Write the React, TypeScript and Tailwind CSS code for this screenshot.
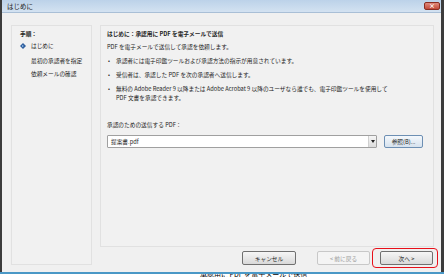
import * as React from "react";

const font = { fontFamily: '"Noto Sans CJK JP", "Noto Sans", sans-serif' };

const Bullet = ({ children }: { children: React.ReactNode }) => (
  <div className="flex mt-[5px]">
    <span className="w-[9px] flex-none pl-[1px]">•</span>
    <span className="flex-1">{children}</span>
  </div>
);

const Btn = ({ label, disabled = false }: { label: string; disabled?: boolean }) => (
  <div
    className={
      "h-[14px] flex items-center justify-center rounded-[2px] border " +
      (disabled
        ? "border-[#c8c8c8] bg-[#f4f4f4] text-[#9a9a9a]"
        : "border-[#707070] bg-gradient-to-b from-[#f6f6f6] to-[#d9d9d9] text-[#222]")
    }
  >
    {label}
  </div>
);

export default function App() {
  return (
    <div className="w-[444px] h-[277px] overflow-hidden bg-white text-[5.7px] leading-[9px] text-[#1e1e1e]" style={font}>
      <div className="h-[272px] flex flex-col border-l-2 border-r-[3px] border-[#3c3c3c]">
        {/* title bar */}
        <div className="h-[13px] flex items-center justify-between bg-gradient-to-b from-[#bcd2e9] to-[#d3e2f1] border-b border-[#a9bfd6] pl-[5px] pr-[1px]">
          <span className="text-[6.5px] text-[#1a1a1a]">はじめに</span>
          <div className="w-[16px] h-[8px] rounded-[2px] bg-gradient-to-b from-[#e08a7c] to-[#c24a3a] border border-[#8a2e22] flex items-center justify-center text-white text-[6px] leading-none font-bold">
            ×
          </div>
        </div>

        {/* body */}
        <div className="flex-1 flex bg-[#f0f0f0] pt-[12px] pb-[7px] pl-[9px] pr-[7px] gap-[8px]">
          {/* steps */}
          <div className="w-[85px] border border-[#e1e1e1] bg-[#f1f1f1] pt-[3px] pl-[8px]">
            <div className="font-bold">手順：</div>
            <div className="flex items-center mt-[3px]">
              <span className="w-[11px] flex-none">
                <svg width="6" height="6" viewBox="0 0 6 6">
                  <path d="M3 0 L6 3 L3 6 L0 3 Z" fill="#2f5f9e" />
                  <path d="M2 2 L4 3 L2 4 Z" fill="#9cc3ee" />
                </svg>
              </span>
              <span>はじめに</span>
            </div>
            <div className="pl-[11px] mt-[6px]">最初の承認者を指定</div>
            <div className="pl-[11px] mt-[4px]">依頼メールの確認</div>
          </div>

          {/* main column */}
          <div className="flex-1 flex flex-col">
            <div className="flex-1 border border-[#e1e1e1] bg-[#f1f1f1] pt-[3px] pl-[6px] pr-[10px]">
              <div className="font-bold">はじめに：承認用に PDF を電子メールで送信</div>
              <div className="mt-[4px]">PDF を電子メールで送信して承認を依頼します。</div>
              <Bullet>承認者には電子印鑑ツールおよび承認方法の指示が用意されています。</Bullet>
              <Bullet>受信者は、承認した PDF を次の承認者へ送信します。</Bullet>
              <Bullet>
                無料の Adobe Reader 9 以降または Adobe Acrobat 9 以降のユーザなら誰でも、電子印鑑ツールを使用して
                <br />
                PDF 文書を承認できます。
              </Bullet>
              <div className="mt-[18px]">承認のための送信する PDF：</div>
              <div className="flex mt-[6px] gap-[7px]">
                <div className="w-[270px] h-[13px] flex items-center border border-[#a0a0a0] bg-white rounded-[1px]">
                  <span className="flex-1 pl-[3px]">提案書.pdf</span>
                  <div className="w-[8px] h-[11px] flex items-center justify-center border-l border-[#d0d0d0] bg-gradient-to-b from-[#f6f6f6] to-[#dcdcdc]">
                    <svg width="4" height="3" viewBox="0 0 4 3">
                      <path d="M0 0 L4 0 L2 3 Z" fill="#222" />
                    </svg>
                  </div>
                </div>
                <div className="w-[39px] h-[13px] flex items-center justify-center rounded-[2px] border border-[#6d8fb3] bg-gradient-to-b from-[#f4f8fc] to-[#d6e2ee]">
                  参照(B)...
                </div>
              </div>
            </div>

            {/* buttons */}
            <div className="flex justify-end items-center mt-[4px] pr-[1px]">
              <div className="w-[54px]">
                <Btn label="キャンセル" />
              </div>
              <div className="w-[53px] ml-[21px]">
                <Btn label="< 前に戻る" disabled />
              </div>
              <div className="w-[53px] ml-[10px] relative">
                <Btn label="次へ >" />
                <div className="absolute left-[-8px] right-[-5px] top-[-3px] bottom-[-3px] rounded-[4px] border-[1.5px] border-[#e8101a]" />
              </div>
            </div>
          </div>
        </div>
      </div>
      <div className="h-[2px] bg-[#4a98c6]" />
      <div className="h-[3px] overflow-hidden relative">
        <div className="absolute left-[200px] top-[-4px] text-[7px] leading-[8px] text-black whitespace-nowrap">
          承認用に PDF を電子メールで送信
        </div>
      </div>
    </div>
  );
}
